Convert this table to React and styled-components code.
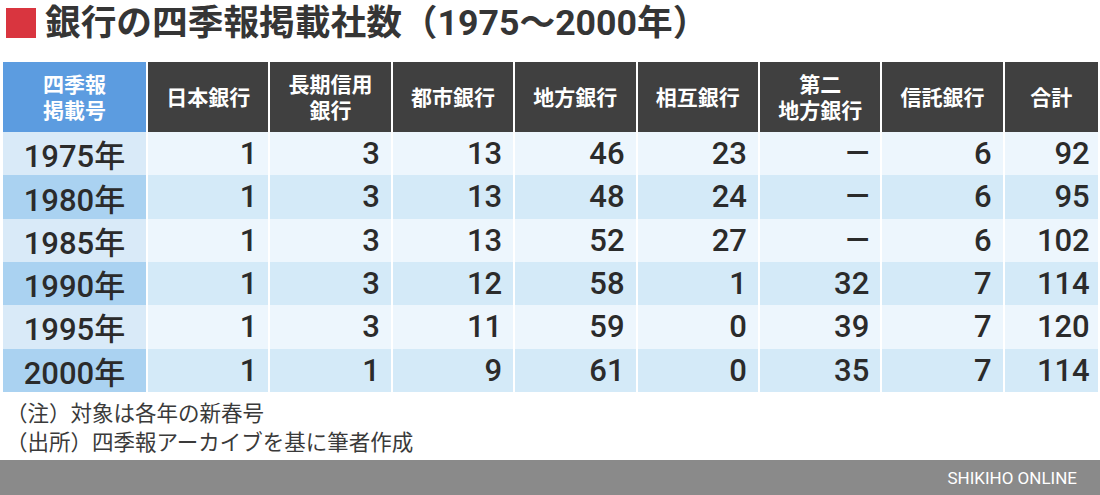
import React from 'react';
import styled, { createGlobalStyle } from 'styled-components';

const GlobalStyle = createGlobalStyle`
    html, body {
        margin: 0;
        padding: 0;
        background: #ffffff;
    }
    body {
        font-family: 'Roboto', 'Noto Sans CJK JP', sans-serif;
        color: #2b2b2b;
    }
`;

const Page = styled.div`
    width: 1100px;
    height: 495px;
    display: flex;
    flex-direction: column;
    overflow: hidden;
`;

const TitleRow = styled.div`
    display: flex;
    align-items: flex-start;
    height: 62px;
    padding: 8px 0 0 6px;
    box-sizing: border-box;
`;

const TitleMark = styled.span`
    width: 30px;
    height: 30px;
    background: #d9353f;
    margin-right: 9px;
    flex-shrink: 0;
`;

const TitleText = styled.h1`
    margin: 0;
    font-family: 'Roboto', 'Noto Sans CJK JP', sans-serif;
    font-size: 35.7px;
    font-weight: 700;
    line-height: 30px;
    color: #353535;
    white-space: nowrap;
`;

const Table = styled.div`
    display: grid;
    grid-template-columns: 143px repeat(7, 120.4px) 93px;
    grid-template-rows: 70px;
    grid-auto-rows: 43.33px;
    column-gap: 2px;
    margin-left: 3px;
`;

const HeadCell = styled.div`
    background: ${({ $accent }) => ($accent ? '#5c9ce0' : '#404040')};
    color: #ffffff;
    font-family: 'Noto Sans CJK JP', sans-serif;
    font-size: 21px;
    font-weight: 700;
    line-height: 26px;
    display: flex;
    align-items: center;
    justify-content: center;
    text-align: center;
    padding-bottom: 2px;
    box-sizing: border-box;
`;

const YearCell = styled.div`
    background: ${({ $even }) => ($even ? '#aad2f1' : '#d9eaf8')};
    font-size: 31px;
    font-weight: 500;
    display: flex;
    align-items: center;
    justify-content: center;
`;

const NumCell = styled.div`
    background: ${({ $even }) => ($even ? '#d4eaf8' : '#edf6fd')};
    font-size: 31px;
    font-weight: 500;
    display: flex;
    align-items: center;
    justify-content: flex-end;
    padding-right: ${({ $last }) => ($last ? '8px' : '11px')};
`;

const Notes = styled.div`
    padding: 5px 0 0 6px;
    font-family: 'Noto Sans CJK JP', sans-serif;
    font-size: 21.5px;
    line-height: 29px;
    color: #3a3a3a;
`;

const Footer = styled.div`
    margin-top: auto;
    height: 35px;
    background: #8a8a8a;
    display: flex;
    align-items: center;
    justify-content: flex-end;
    padding-right: 23px;
`;

const Brand = styled.span`
    color: #ffffff;
    font-family: 'Roboto', sans-serif;
    font-size: 17px;
    font-weight: 400;
`;

const headers = [
    ['四季報', '掲載号'],
    ['日本銀行'],
    ['長期信用', '銀行'],
    ['都市銀行'],
    ['地方銀行'],
    ['相互銀行'],
    ['第二', '地方銀行'],
    ['信託銀行'],
    ['合計'],
];

const rows = [
    ['1975年', 1, 3, 13, 46, 23, '—', 6, 92],
    ['1980年', 1, 3, 13, 48, 24, '—', 6, 95],
    ['1985年', 1, 3, 13, 52, 27, '—', 6, 102],
    ['1990年', 1, 3, 12, 58, 1, 32, 7, 114],
    ['1995年', 1, 3, 11, 59, 0, 39, 7, 120],
    ['2000年', 1, 1, 9, 61, 0, 35, 7, 114],
];

function App() {
    return (
        <Page>
            <GlobalStyle />
            <TitleRow>
                <TitleMark />
                <TitleText>銀行の四季報掲載社数（1975〜2000年）</TitleText>
            </TitleRow>

            <Table>
                {headers.map((lines, i) => (
                    <HeadCell key={i} $accent={i === 0}>
                        <div>
                            {lines.map((line) => (
                                <div key={line}>{line}</div>
                            ))}
                        </div>
                    </HeadCell>
                ))}

                {rows.map((row, r) =>
                    row.map((value, c) =>
                        c === 0 ? (
                            <YearCell key={`${r}-${c}`} $even={r % 2 === 1}>
                                {value}
                            </YearCell>
                        ) : (
                            <NumCell key={`${r}-${c}`} $even={r % 2 === 1} $last={c === row.length - 1}>
                                {value}
                            </NumCell>
                        )
                    )
                )}
            </Table>

            <Notes>
                <div>（注）対象は各年の新春号</div>
                <div>（出所）四季報アーカイブを基に筆者作成</div>
            </Notes>

            <Footer>
                <Brand>SHIKIHO ONLINE</Brand>
            </Footer>
        </Page>
    );
}

export default App;
